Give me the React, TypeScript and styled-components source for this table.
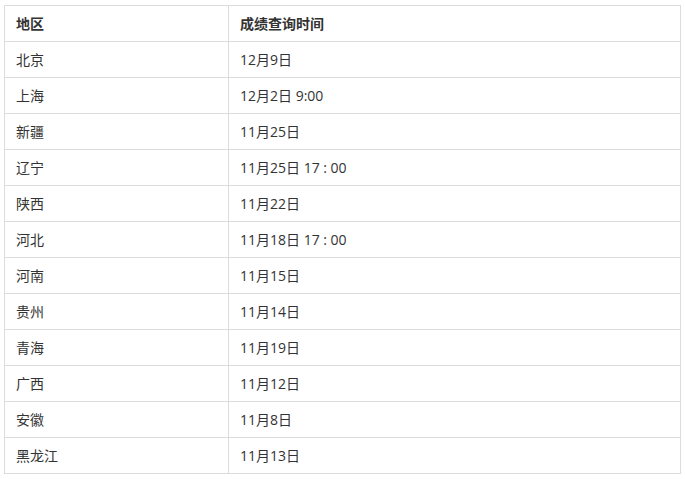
import React from 'react';
import styled, { createGlobalStyle } from 'styled-components';

const GlobalStyle = createGlobalStyle`
  body {
    margin: 0;
    background: #fff;
    font-family: "Open Sans", "Noto Sans CJK SC", sans-serif;
  }
`;

const Page = styled.div`
  padding: 5px 5px 0 4px;
`;

const Table = styled.table`
  width: 677px;
  border-collapse: collapse;
  font-size: 14px;
  color: #333;
`;

const Cell = styled.td<{ $head?: boolean }>`
  height: 36px;
  padding: 0 10px 0 11px;
  border: 1px solid #dcdcdc;
  font-weight: ${(p) => (p.$head ? 700 : 400)};
  line-height: 20px;
  vertical-align: middle;
  box-sizing: border-box;

  &:first-child {
    width: 224px;
  }
`;

const rows: [string, string][] = [
  ['北京', '12月9日'],
  ['上海', '12月2日 9:00'],
  ['新疆', '11月25日'],
  ['辽宁', '11月25日 17 : 00'],
  ['陕西', '11月22日'],
  ['河北', '11月18日 17 : 00'],
  ['河南', '11月15日'],
  ['贵州', '11月14日'],
  ['青海', '11月19日'],
  ['广西', '11月12日'],
  ['安徽', '11月8日'],
  ['黑龙江', '11月13日'],
];

export default function App() {
  return (
    <Page>
      <GlobalStyle />
      <Table>
        <tbody>
          <tr>
            <Cell $head>地区</Cell>
            <Cell $head>成绩查询时间</Cell>
          </tr>
          {rows.map(([area, time]) => (
            <tr key={area}>
              <Cell>{area}</Cell>
              <Cell>{time}</Cell>
            </tr>
          ))}
        </tbody>
      </Table>
    </Page>
  );
}
